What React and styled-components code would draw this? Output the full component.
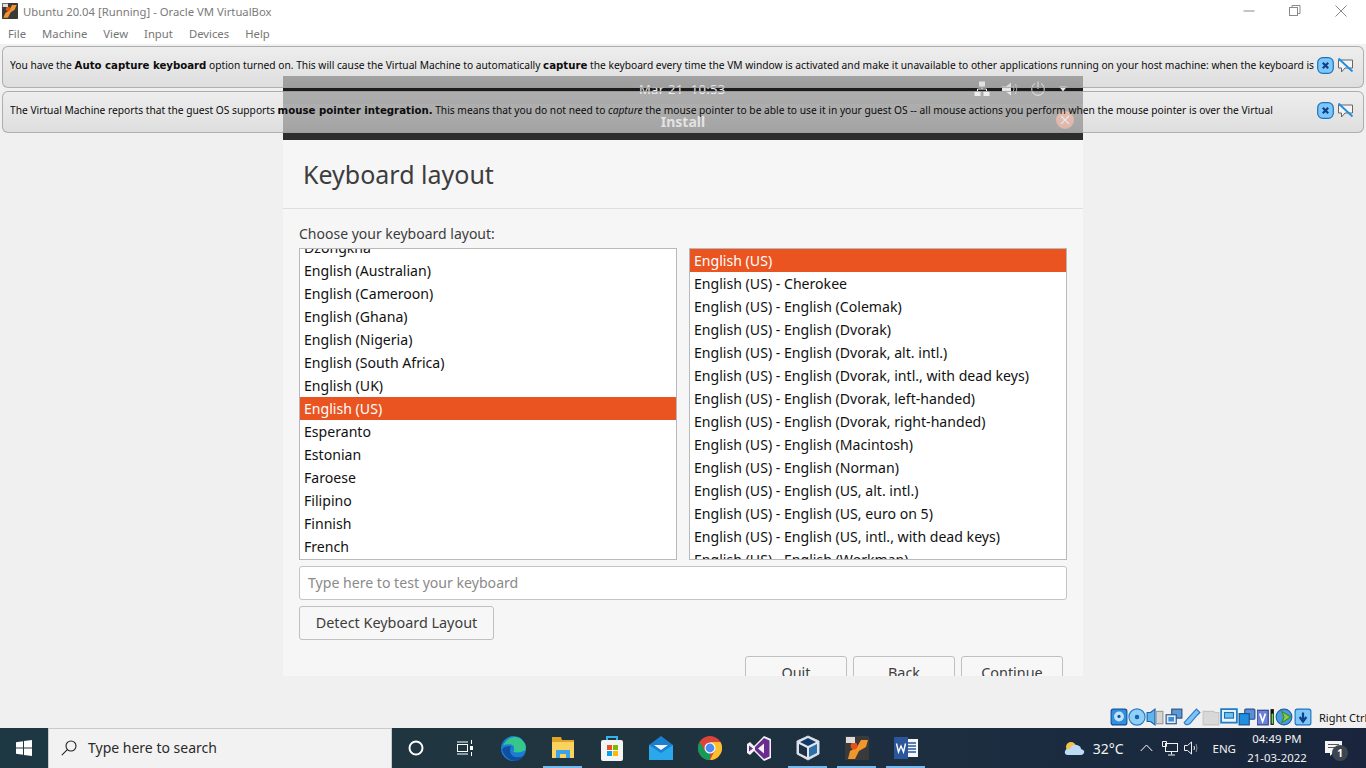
import styled, { createGlobalStyle } from 'styled-components';

const Global = createGlobalStyle`
  html, body { margin: 0; padding: 0; height: 100%; overflow: hidden; }
  * { box-sizing: border-box; }
  body { font-family: "Noto Sans", sans-serif; background: #f0f0f0; }
`;

const Page = styled.div`
  width: 1366px;
  height: 768px;
  display: flex;
  flex-direction: column;
  overflow: hidden;
`;

const TitleBar = styled.div`
  height: 22px;
  flex: none;
  background: #fff;
  display: flex;
  align-items: center;
  padding: 0 2px;
  color: #7b7b7b;
  font: 11.3px "Noto Sans", sans-serif;
`;

const TitleText = styled.span`
  margin-left: 5px;
  flex: 1;
`;

const WinButtons = styled.div`
  display: flex;
  align-items: center;
  margin-top: -1px;
`;

const WinButton = styled.div`
  width: 46px;
  height: 20px;
  display: flex;
  align-items: center;
  justify-content: center;
`;

const MenuBar = styled.div`
  height: 22px;
  flex: none;
  background: #fff;
  display: flex;
  align-items: center;
  gap: 16px;
  padding-left: 8px;
  color: #767676;
  font: 11.3px "Noto Sans", sans-serif;
`;

const Main = styled.div`
  flex: 1;
  position: relative;
  display: flex;
  flex-direction: column;
  background: #f0f0f0;
`;

const Stage = styled.div`
  flex: 1;
  padding: 32px 0 0 283px;
`;

const Guest = styled.div`
  width: 800px;
  height: 600px;
  overflow: hidden;
  display: flex;
  flex-direction: column;
  background: #f6f6f6;
`;

const GnomeBar = styled.div`
  height: 28px;
  flex: none;
  background: #1c1c1c;
  position: relative;
  display: flex;
  align-items: center;
  justify-content: flex-end;
  padding: 0 15px 3px 0;
  gap: 12px;
`;

const Clock = styled.span`
  position: absolute;
  left: 356px;
  top: 4px;
  color: #f0f0f0;
  font: 13px "Noto Sans", sans-serif;
  letter-spacing: 0.3px;
`;

const InstallBar = styled.div`
  height: 36px;
  flex: none;
  background: #2d2d2d;
  position: relative;
  text-align: center;
  color: #f0f0f0;
  font: bold 14px/36px "Noto Sans", sans-serif;
`;

const CloseDot = styled.div`
  position: absolute;
  right: 9px;
  top: 7px;
  width: 18px;
  height: 18px;
  border-radius: 50%;
  background: #e9663f;
  display: flex;
  align-items: center;
  justify-content: center;
`;

const Header = styled.div`
  height: 69px;
  flex: none;
  padding: 16px 0 0 20px;
  border-bottom: 1px solid #dedede;
  color: #3d3d3d;
  font: 25px/36px "Noto Sans", sans-serif;
`;

const Body = styled.div`
  padding: 15px 16px 0;
`;

const Label = styled.div`
  color: #3d3d3d;
  font: 14px/20px "Noto Sans", sans-serif;
  margin-bottom: 4px;
`;

const Lists = styled.div`
  display: grid;
  grid-template-columns: 378px 378px;
  column-gap: 12px;
`;

const ListBox = styled.div`
  height: 312px;
  overflow: hidden;
  background: #fff;
  border: 1px solid #b9b9b9;
`;

const ListScroll = styled.div`
  margin-top: ${(p) => p.$offset}px;
`;

const Row = styled.div`
  height: 23px;
  padding-left: 4px;
  white-space: nowrap;
  color: ${(p) => (p.$selected ? '#fff' : '#111')};
  background: ${(p) => (p.$selected ? '#e95420' : 'transparent')};
  font: 14.1px/23px "Noto Sans", sans-serif;
`;

const TestInput = styled.div`
  height: 34px;
  width: 768px;
  margin-top: 6px;
  padding-left: 8px;
  background: #fff;
  border: 1px solid #c4c4c4;
  border-radius: 3px;
  color: #8a8a8a;
  font: 14.1px/32px "Noto Sans", sans-serif;
`;

const Button = styled.div`
  height: 34px;
  width: ${(p) => p.$width}px;
  background: #f7f7f7;
  border: 1px solid #c0c0c0;
  border-radius: 3px;
  text-align: center;
  color: #3d3d3d;
  font: 14.4px/32px "Noto Sans", sans-serif;
`;

const DetectRow = styled.div`
  margin-top: 6px;
`;

const Footer = styled.div`
  display: flex;
  justify-content: flex-end;
  gap: 6px;
  margin-top: 16px;
  padding-right: 4px;
`;

const Notices = styled.div`
  position: absolute;
  left: 2px;
  right: 2px;
  top: 2px;
  display: flex;
  flex-direction: column;
  gap: 3px;
`;

const Notice = styled.div`
  height: 42px;
  display: flex;
  align-items: center;
  padding: 0 9px 4px 7px;
  border: 1px solid rgba(150, 150, 150, 0.7);
  border-radius: 6px;
  background: linear-gradient(rgba(236, 236, 236, 0.7), rgba(214, 214, 214, 0.7));
`;

const NoticeText = styled.div`
  flex: 1;
  color: #0c0c0c;
  white-space: nowrap;
  overflow: hidden;
  font: 10.22px "Noto Sans", sans-serif;
  b { font-family: "DejaVu Sans", sans-serif; font-size: 10.2px; }
`;

const NoticeIcons = styled.div`
  display: flex;
  align-items: center;
  gap: 3px;
`;

const StatusRow = styled.div`
  height: 22px;
  flex: none;
  display: flex;
  align-items: center;
  justify-content: flex-end;
  gap: 0.4px;
  color: #111;
  font: 11px "Noto Sans", sans-serif;
`;

const HostKey = styled.span`
  margin-left: 7px;
  width: 47px;
  white-space: nowrap;
`;

const Taskbar = styled.div`
  height: 40px;
  flex: none;
  display: flex;
  align-items: center;
  background: linear-gradient(90deg, #1d3843 0%, #20343f 45%, #1b2c40 75%, #18253c 100%);
  color: #f2f2f2;
`;

const StartButton = styled.div`
  width: 48px;
  height: 40px;
  display: flex;
  align-items: center;
  justify-content: center;
`;

const SearchBox = styled.div`
  width: 344px;
  height: 40px;
  display: flex;
  align-items: center;
  gap: 11px;
  padding: 0 0 2px 12px;
  background: #f2f2f2;
  border: 1px solid #c9c9c9;
  border-bottom: none;
  color: #2a2a2a;
  font: 14px "Noto Sans", sans-serif;
`;

const TaskIcons = styled.div`
  display: flex;
  margin-left: -1px;
`;

const TaskIcon = styled.div`
  width: 49px;
  height: 40px;
  position: relative;
  display: flex;
  align-items: center;
  justify-content: center;
  &::after {
    content: '';
    display: ${(p) => (p.$open ? 'block' : 'none')};
    position: absolute;
    left: 5px;
    right: 5px;
    bottom: 0;
    height: 2px;
    background: #76b9ed;
  }
`;

const Tray = styled.div`
  flex: 1;
  height: 40px;
  display: flex;
  align-items: center;
  justify-content: flex-end;
`;

const Temp = styled.span`
  font: 14px "Noto Sans", sans-serif;
  margin: 0 17px 0 8px;
`;

const TrayIcon = styled.div`
  display: flex;
  align-items: center;
  margin-right: ${(p) => p.$gap}px;
`;

const Lang = styled.span`
  font: 11.5px "Noto Sans", sans-serif;
  margin-right: 8px;
`;

const DateTime = styled.div`
  width: 66px;
  margin-right: 12px;
  text-align: center;
  font: 11.4px/19px "Noto Sans", sans-serif;
`;

const Bell = styled.div`
  position: relative;
  width: 44px;
  height: 40px;
  display: flex;
  align-items: center;
  padding-left: 3px;
`;

const Badge = styled.span`
  position: absolute;
  left: 10px;
  top: 17px;
  width: 16px;
  height: 16px;
  border-radius: 50%;
  background: #3d4650;
  text-align: center;
  color: #fff;
  font: bold 10px/16px "Noto Sans", sans-serif;
`;

const leftRows = ['Dzongkha', 'English (Australian)', 'English (Cameroon)', 'English (Ghana)', 'English (Nigeria)', 'English (South Africa)', 'English (UK)', 'English (US)', 'Esperanto', 'Estonian', 'Faroese', 'Filipino', 'Finnish', 'French'];

const rightRows = ['English (US)', 'English (US) - Cherokee', 'English (US) - English (Colemak)', 'English (US) - English (Dvorak)', 'English (US) - English (Dvorak, alt. intl.)', 'English (US) - English (Dvorak, intl., with dead keys)', 'English (US) - English (Dvorak, left-handed)', 'English (US) - English (Dvorak, right-handed)', 'English (US) - English (Macintosh)', 'English (US) - English (Norman)', 'English (US) - English (US, alt. intl.)', 'English (US) - English (US, euro on 5)', 'English (US) - English (US, intl., with dead keys)', 'English (US) - English (Workman)'];

const VBoxLogo = ({ size = 16 }) => (
  <svg width={size} height={size} viewBox="0 0 24 24">
    <rect width="24" height="24" rx="1" fill="#3a3a3a" />
    <path d="M22 3 L15 3 L11 11 L5 15 L2 22 L9 22 L13 14 L19 10 Z" fill="#f0962a" />
    <circle cx="9" cy="9" r="3.4" fill="#e8501a" />
    <rect x="1" y="1" width="8" height="5" fill="#ddd" />
  </svg>
);

const NoticeClose = () => (
  <svg width="17" height="17" viewBox="0 0 17 17">
    <rect x="0.7" y="0.7" width="15.6" height="15.6" rx="5" fill="#7cc8f8" stroke="#1f6fc0" strokeWidth="1.2" />
    <path d="M5.8 5.8 L11.2 11.2 M11.2 5.8 L5.8 11.2" stroke="#123f8c" strokeWidth="2.2" />
  </svg>
);

const NoticeMute = () => (
  <svg width="17" height="17" viewBox="0 0 17 17">
    <path d="M1.5 3 H15.5 V11 H8 L4.5 15 V11 H1.5 Z" fill="#f4f4f4" stroke="#666" strokeWidth="1" />
    <path d="M1.5 1.5 L15.5 14.5" stroke="#1d8fe0" strokeWidth="1.8" />
  </svg>
);

const status = {
  disk: <><rect x="1" y="1" width="14" height="14" rx="2" fill="#2f8fe0" stroke="#14509c" /><circle cx="8" cy="7.5" r="4.4" fill="#bfe3fa" /><circle cx="8" cy="7.5" r="1.4" fill="#14509c" /></>,
  cd: <><circle cx="8" cy="8" r="7.2" fill="#8fd0f6" stroke="#2a78c8" /><circle cx="8" cy="8" r="2" fill="#1c5fae" /></>,
  audio: <><path d="M1 4 H4 L8 1 V15 L4 12 H1 Z" fill="#5db5ee" stroke="#1c5fae" /><rect x="9" y="3" width="6" height="11" fill="#d4d4d4" stroke="#999" /></>,
  net: <><rect x="6" y="1" width="9" height="8" fill="#5a9ad8" stroke="#2c4f80" /><rect x="1" y="6" width="9" height="8" fill="#dcecf8" stroke="#2c4f80" /><rect x="3" y="8" width="5" height="4" fill="#3f8fd8" /></>,
  usb: <><path d="M1 13 L10 3 L12 1 L15 4 L13 6 L6 14 Q2 16 1 13 Z" fill="#7cc4f4" stroke="#2a78c8" /></>,
  folder: <><path d="M1 3 H10 L12 4 H15 V15 H1 Z" fill="#d8d8d8" stroke="#c4c4c4" /></>,
  screen: <><rect x="1" y="1" width="14" height="12" fill="#eaf5fd" stroke="#1f7fc8" strokeWidth="1.6" /><rect x="4" y="4" width="8" height="5" fill="#6fc0f2" stroke="#1f6fb0" /></>,
  video: <><rect x="6" y="1" width="9" height="9" rx="1" fill="#5a8fd8" stroke="#24508c" /><rect x="1" y="5" width="9" height="10" fill="#1f8fe0" stroke="#14508c" /></>,
  v: <><rect x="0" y="2" width="10" height="13" fill="#6a82d8" stroke="#2c3f8c" /><path d="M2.5 5 L5 12 L7.5 5" stroke="#fff" strokeWidth="1.5" fill="none" /><rect x="12" y="1" width="3" height="14" fill="#111" /><rect x="13" y="5" width="1.4" height="9" fill="#5fe04a" /></>,
  ball: <><circle cx="8" cy="8" r="7" fill="#4a9ae0" stroke="#1c5fae" /><path d="M6 3 L14 8 L6 13 L8 8 Z" fill="#86d043" stroke="#3f8a20" /></>,
  down: <><rect x="1" y="1" width="14" height="14" rx="2" fill="#7cc8f8" stroke="#1f6fc0" /><path d="M8 4 V10 M5 8 L8 12 L11 8" stroke="#123f8c" strokeWidth="2" fill="none" /></>,
};

function App() {
  return (
    <Page>
      <Global />
      <TitleBar>
        <VBoxLogo />
        <TitleText>Ubuntu 20.04 [Running] - Oracle VM VirtualBox</TitleText>
        <WinButtons>
          <WinButton>
            <svg width="12" height="12"><path d="M0.5 6 H11.5" stroke="#8a8a8a" /></svg>
          </WinButton>
          <WinButton>
            <svg width="12" height="12" fill="none" stroke="#8a8a8a"><rect x="0.5" y="2.5" width="8" height="8" /><path d="M3 2.5 V0.5 H11 V8.5 H8.5" /></svg>
          </WinButton>
          <WinButton>
            <svg width="12" height="12"><path d="M0.5 0.5 L11.5 11.5 M11.5 0.5 L0.5 11.5" stroke="#8a8a8a" /></svg>
          </WinButton>
        </WinButtons>
      </TitleBar>
      <MenuBar>
        {['File', 'Machine', 'View', 'Input', 'Devices', 'Help'].map((m) => (
          <span key={m}>{m}</span>
        ))}
      </MenuBar>
      <Main>
        <Stage>
          <Guest>
            <GnomeBar>
              <Clock>Mar 21&nbsp; 10:53</Clock>
              <svg width="16" height="15" fill="#f4f4f4" stroke="#f4f4f4">
                <rect x="5.5" y="1" width="5" height="4" />
                <rect x="1" y="10.5" width="5" height="4" />
                <rect x="10" y="10.5" width="5" height="4" />
                <path d="M8 5 V8 M3.5 10 V8 H12.5 V10" fill="none" />
              </svg>
              <svg width="16" height="14" fill="#e6e6e6">
                <path d="M0 4.5 H4 L9 0.5 V13.5 L4 9.5 H0 Z" />
                <path d="M11 4 Q13 7 11 10 M13.5 2 Q16 7 13.5 12" stroke="#a8a8a8" fill="none" />
              </svg>
              <svg width="16" height="16" fill="none" stroke="#eaeaea" strokeWidth="1">
                <path d="M5 2.5 A6.3 6.3 0 1 0 11 2.5 M8 0.5 V8" />
              </svg>
              <svg width="10" height="6" fill="#eaeaea"><path d="M1 0.5 H9 L5 5.5 Z" /></svg>
            </GnomeBar>
            <InstallBar>
              Install
              <CloseDot>
                <svg width="10" height="10"><path d="M1 1 L9 9 M9 1 L1 9" stroke="#fff" strokeWidth="1.2" /></svg>
              </CloseDot>
            </InstallBar>
            <Header>Keyboard layout</Header>
            <Body>
              <Label>Choose your keyboard layout:</Label>
              <Lists>
                <ListBox>
                  <ListScroll $offset={-13}>
                    {leftRows.map((r) => (
                      <Row key={r} $selected={r === 'English (US)'}>{r}</Row>
                    ))}
                  </ListScroll>
                </ListBox>
                <ListBox>
                  <ListScroll $offset={0}>
                    {rightRows.map((r, i) => (
                      <Row key={r} $selected={i === 0}>{r}</Row>
                    ))}
                  </ListScroll>
                </ListBox>
              </Lists>
              <TestInput>Type here to test your keyboard</TestInput>
              <DetectRow>
                <Button $width={195}>Detect Keyboard Layout</Button>
              </DetectRow>
              <Footer>
                <Button $width={102}>Quit</Button>
                <Button $width={102}>Back</Button>
                <Button $width={102}>Continue</Button>
              </Footer>
            </Body>
          </Guest>
        </Stage>
        <Notices>
          <Notice>
            <NoticeText>
              You have the <b>Auto capture keyboard</b> option turned on. This will cause the Virtual Machine to automatically <b>capture</b> the keyboard every time the VM window is activated and make it unavailable to other applications running on your host machine: when the keyboard is
            </NoticeText>
            <NoticeIcons><NoticeClose /><NoticeMute /></NoticeIcons>
          </Notice>
          <Notice>
            <NoticeText>
              The Virtual Machine reports that the guest OS supports <b>mouse pointer integration.</b> This means that you do not need to <i>capture</i> the mouse pointer to be able to use it in your guest OS -- all mouse actions you perform when the mouse pointer is over the Virtual
            </NoticeText>
            <NoticeIcons><NoticeClose /><NoticeMute /></NoticeIcons>
          </Notice>
        </Notices>
        <StatusRow>
          {Object.keys(status).map((k) => (
            <svg key={k} width="18" height="18" viewBox="0 0 16 16">{status[k]}</svg>
          ))}
          <HostKey>Right Ctrl</HostKey>
        </StatusRow>
      </Main>
      <Taskbar>
        <StartButton>
          <svg width="16" height="16" fill="#fff">
            <path d="M0 2.3 L7 1.3 V7.5 H0 Z M8 1.1 L16 0 V7.5 H8 Z M0 8.5 H7 V14.7 L0 13.7 Z M8 8.5 H16 V16 L8 14.9 Z" />
          </svg>
        </StartButton>
        <SearchBox>
          <svg width="16" height="16" fill="none" stroke="#222" strokeWidth="1.1">
            <circle cx="10" cy="6" r="5" />
            <path d="M6.3 9.7 L0.8 15.2" />
          </svg>
          Type here to search
        </SearchBox>
        <TaskIcons>
          <TaskIcon>
            <svg width="16" height="16" fill="none" stroke="#fff" strokeWidth="2"><circle cx="8" cy="8" r="6.5" /></svg>
          </TaskIcon>
          <TaskIcon>
            <svg width="16" height="16" fill="none" stroke="#fff"><rect x="0.5" y="4.5" width="10" height="7" /><path d="M0 2 H11 M0 14 H11 M14.5 0 V4 M14.5 12 V16" /><rect x="13" y="6" width="3" height="4" fill="#fff" stroke="none" /></svg>
          </TaskIcon>
          <TaskIcon>
            <svg width="25" height="25" viewBox="0 0 24 24">
              <circle cx="12" cy="12" r="12" fill="#1b7ed4" />
              <path d="M2 9 Q8 -2 18 2 Q26 8 23 14 Q16 17 12 15 Q14 9 9 8 Q4 8 2 9 Z" fill="#36c68c" />
              <path d="M1 13 Q4 23 14 24 Q20 23 22 19 Q12 23 9 16 Q8 12 10 10 Q4 9 1 13 Z" fill="#0f4ea0" />
            </svg>
          </TaskIcon>
          <TaskIcon $open>
            <svg width="24" height="22" viewBox="0 0 24 22">
              <path d="M1 0 H10 L11 3 H23 V21 H1 Z" fill="#e0a526" />
              <rect x="1" y="5" width="22" height="16" fill="#fbd25d" />
              <path d="M5 21 V13 H19 V21 H15 V17 H9 V21 Z" fill="#3ca3e6" />
            </svg>
          </TaskIcon>
          <TaskIcon>
            <svg width="24" height="26" viewBox="0 0 24 26">
              <path d="M7 6 V2 H17 V6" fill="none" stroke="#35b4ea" strokeWidth="2" />
              <rect x="1" y="5" width="22" height="21" rx="2" fill="#f4f4f4" />
              <rect x="7" y="10" width="5" height="5" fill="#f25022" />
              <rect x="13" y="10" width="5" height="5" fill="#7fba00" />
              <rect x="7" y="16" width="5" height="5" fill="#00a4ef" />
              <rect x="13" y="16" width="5" height="5" fill="#ffb900" />
            </svg>
          </TaskIcon>
          <TaskIcon>
            <svg width="24" height="24" viewBox="0 0 24 24">
              <path d="M0 9 L12 0 L24 9 V24 H0 Z" fill="#1a7fd0" />
              <path d="M0 9 L12 17 L24 9 V24 H0 Z" fill="#2aa8ec" />
              <path d="M5 9 H19 L12 14 Z" fill="#f0f6fb" />
            </svg>
          </TaskIcon>
          <TaskIcon>
            <svg width="24" height="24" viewBox="0 0 24 24">
              <circle cx="12" cy="12" r="12" fill="#db4437" />
              <path d="M12 12 L1.6 18 A12 12 0 0 0 12 24 Z" fill="#0f9d58" />
              <path d="M12 6 H22.4 A12 12 0 0 1 12 24 L17 14 Z" fill="#fbc02d" />
              <path d="M1.6 6 L7 15 L1.6 18 A12 12 0 0 1 1.6 6 Z" fill="#0f9d58" />
              <circle cx="12" cy="12" r="5.5" fill="#fff" />
              <circle cx="12" cy="12" r="4.4" fill="#4b8bf5" />
            </svg>
          </TaskIcon>
          <TaskIcon>
            <svg width="24" height="25" viewBox="0 0 24 25">
              <path d="M17 0 L24 3 V22 L17 25 L7 15 L3 19 L0 17 V8 L3 6 L7 10 Z" fill="#f2f2f2" />
              <path d="M17 2 L22.5 4.5 V20.5 L17 23 L8 14 V11 Z M2 9.5 V15.5 L6 12.5 Z" fill="#6a2c91" />
              <path d="M17 7.5 V17.5 L11 12.5 Z" fill="#f2f2f2" />
            </svg>
          </TaskIcon>
          <TaskIcon $open>
            <svg width="24" height="26" viewBox="0 0 24 26">
              <path d="M12 1 L23 6 V19 L12 25 L1 19 V6 Z" fill="#dfe6ee" stroke="#cfd8e2" />
              <path d="M12 3 L20 7 L12 11 L4 7 Z" fill="#123a66" />
              <path d="M3 9 L11 13 V22 L3 18 Z" fill="#1c2f44" />
              <path d="M21 9 L13 13 V22 L21 18 Z" fill="#2d6fa8" />
            </svg>
          </TaskIcon>
          <TaskIcon $open>
            <svg width="24" height="24" viewBox="0 0 24 24">
              <rect width="24" height="24" rx="1" fill="#3a3a3a" />
              <path d="M23 4 L16 4 L12 11 L5 15 L3 23 L10 23 L14 15 L21 11 Z" fill="#f0962a" />
              <circle cx="9" cy="10" r="3.4" fill="#e8501a" />
              <rect x="1" y="1" width="9" height="6" fill="#ddd" />
            </svg>
          </TaskIcon>
          <TaskIcon $open>
            <svg width="24" height="24" viewBox="0 0 24 24">
              <rect x="7" y="3" width="17" height="18" fill="#f4f6fa" />
              <path d="M13 7 H22 M13 10 H22 M13 13 H22 M13 16 H22" stroke="#2b579a" strokeWidth="1.3" />
              <rect x="0" y="1" width="14" height="22" fill="#2b579a" />
              <path d="M2.5 7.5 L4.5 16 L7 10 L9.5 16 L11.5 7.5" stroke="#fff" strokeWidth="1.4" fill="none" />
            </svg>
          </TaskIcon>
        </TaskIcons>
        <Tray>
          <svg width="21" height="15" viewBox="0 0 21 15">
            <circle cx="7" cy="6" r="5" fill="#f5c445" />
            <path d="M4 14 Q0 14 1 10 Q2 7 6 8 Q8 3 13 4 Q17 5 17 8 Q21 9 20 12 Q19 14 17 14 Z" fill="#bcdcf5" />
          </svg>
          <Temp>32°C</Temp>
          <TrayIcon $gap={9}>
            <svg width="13" height="8" fill="none" stroke="#fff"><path d="M0.7 7 L6.5 1 L12.3 7" /></svg>
          </TrayIcon>
          <TrayIcon $gap={5}>
            <svg width="17" height="15" fill="none" stroke="#f2f2f2"><rect x="3.5" y="2.5" width="12" height="8" /><path d="M0.5 0.5 H4.5 V5.5 H0.5 Z M9.5 10.5 V13.5 M6 14 H13" /></svg>
          </TrayIcon>
          <TrayIcon $gap={12}>
            <svg width="16" height="14" fill="none" stroke="#f2f2f2"><path d="M0.5 4.5 H3.5 L7.5 1 V13 L3.5 9.5 H0.5 Z M10 5 Q11 7 10 9" /><path d="M12 3 Q14 7 12 11" stroke="#8a8f96" /></svg>
          </TrayIcon>
          <Lang>ENG</Lang>
          <DateTime>04:49 PM<br />21-03-2022</DateTime>
          <Bell>
            <svg width="17" height="15" viewBox="0 0 17 15">
              <path d="M0 0 H17 V12 H8 L5 15 V12 H0 Z" fill="#f4f4f4" />
              <path d="M3 3.5 H14 M3 6.5 H14" stroke="#555" />
            </svg>
            <Badge>1</Badge>
          </Bell>
        </Tray>
      </Taskbar>
    </Page>
  );
}

export default App;
